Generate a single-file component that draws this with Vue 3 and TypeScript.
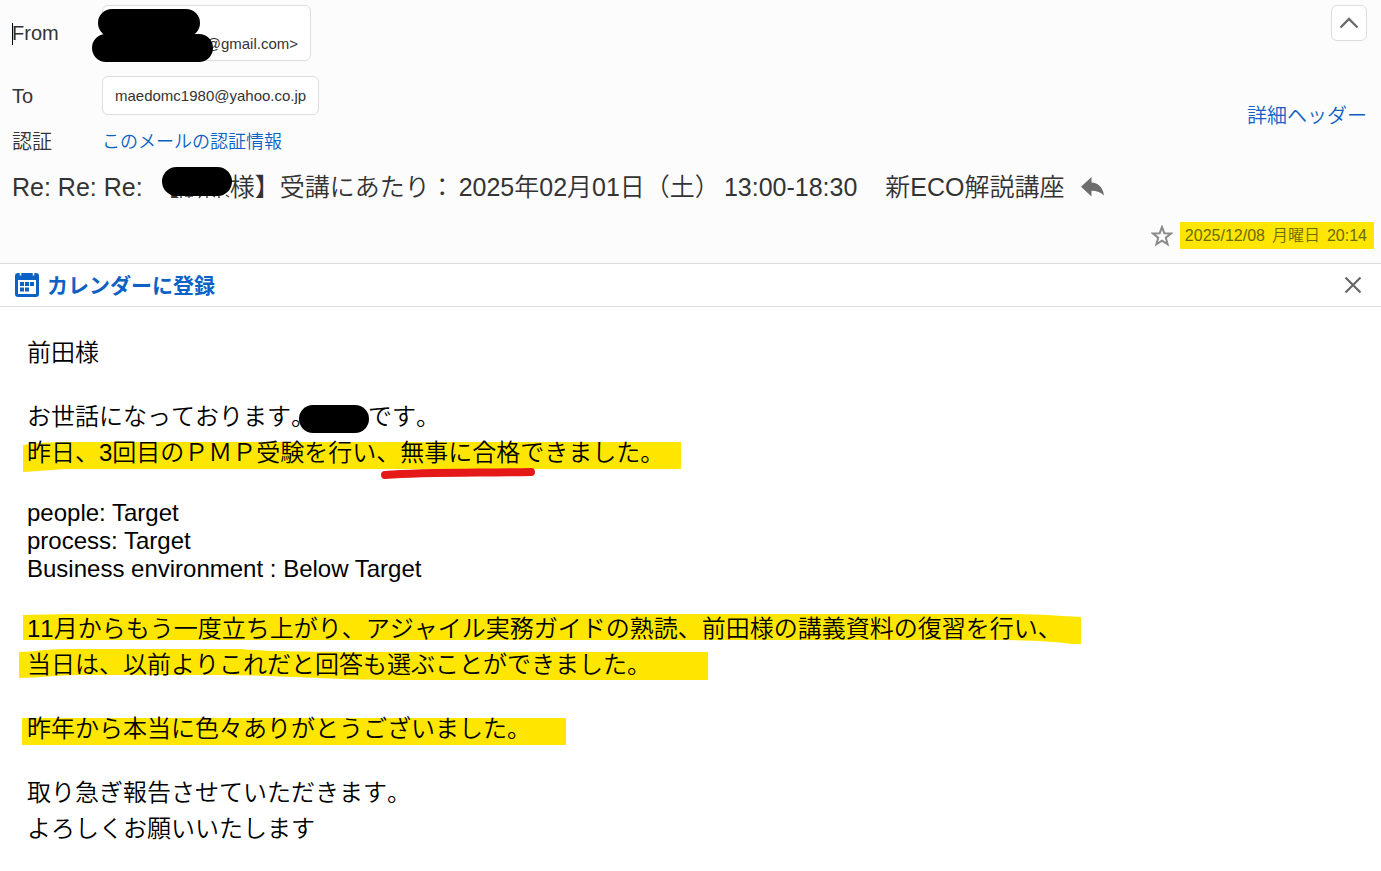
<script setup lang="ts">
interface Line {
  text: string
  kind: 'ja' | 'en' | 'gap'
  hidden?: string
}

const lines: Line[] = [
  { text: '前田様', kind: 'ja' },
  { text: '', kind: 'gap' },
  { text: 'お世話になっております。', kind: 'ja', hidden: 'です。' },
  { text: '昨日、3回目のＰＭＰ受験を行い、無事に合格できました。', kind: 'ja' },
  { text: '', kind: 'gap' },
  { text: 'people: Target', kind: 'en' },
  { text: 'process: Target', kind: 'en' },
  { text: 'Business environment : Below Target', kind: 'en' },
  { text: '', kind: 'gap' },
  { text: '11月からもう一度立ち上がり、アジャイル実務ガイドの熟読、前田様の講義資料の復習を行い、', kind: 'ja' },
  { text: '当日は、以前よりこれだと回答も選ぶことができました。', kind: 'ja' },
  { text: '', kind: 'gap' },
  { text: '昨年から本当に色々ありがとうございました。', kind: 'ja' },
  { text: '', kind: 'gap' },
  { text: '取り急ぎ報告させていただきます。', kind: 'ja' },
  { text: 'よろしくお願いいたします', kind: 'ja' },
]
</script>

<template>
  <main class="mail">
    <header class="head">
      <dl class="fields">
        <div class="field">
          <dt class="caret">From</dt>
          <dd>
            <span class="chip sender">@gmail.com&gt;
              <svg class="redact-from" width="122" height="54" viewBox="0 0 122 54" aria-hidden="true">
                <path d="M20 15H94M14 40H107" fill="none" stroke="#000" stroke-width="28" stroke-linecap="round" />
              </svg>
            </span>
          </dd>
        </div>
        <div class="field">
          <dt>To</dt>
          <dd><span class="chip">maedomc1980@yahoo.co.jp</span></dd>
        </div>
        <div class="field auth">
          <dt>認証</dt>
          <dd><a href="#auth">このメールの認証情報</a></dd>
        </div>
      </dl>
      <div class="tools">
        <button type="button" class="collapse" aria-label="ヘッダーを閉じる">
          <svg width="20" height="12" viewBox="0 0 20 12"><path d="M1.500 10.500L10 2L18.500 10.500" fill="none" stroke="#6b6b6b" stroke-width="2.400" /></svg>
        </button>
        <a href="#detail" class="detail">詳細ヘッダー</a>
      </div>
      <h1 class="subject">
        <span>Re: Re: Re:</span>
        <span class="addressee">【<span class="name"><svg width="70" height="32" viewBox="0 0 70 32" aria-hidden="true">
          <path d="M19 28v3M23 29h8M27 27v4M39 28l-2 3M45 27v4M50 28l3 2M57 27v4M64 28l3 2" fill="none" stroke="#444" stroke-width="1.500" />
          <rect width="70" height="29" rx="14.500" />
        </svg></span>様】受講にあたり：</span>
        <span>2025年02月01日（土）</span>
        <span>13:00-18:30</span>
        <span class="course">新ECO解説講座</span>
        <button type="button" class="plain reply" aria-label="返信">
          <svg width="24" height="20" viewBox="0 0 24 20"><path d="M10.500 0V5.600C17 5.800 22 10.500 23 18.500C20 15.500 16 13.800 10.500 13.800V19.500L0 9.800Z" fill="#6e6e6e" /></svg>
        </button>
      </h1>
      <div class="meta">
        <button type="button" class="plain" aria-label="スターを付ける">
          <svg width="22" height="22" viewBox="0 0 22 22"><path d="M11 2L13.300 8.200L20 8.500L14.800 12.700L16.600 19.300L11 15.600L5.400 19.300L7.200 12.700L2 8.500L8.700 8.200Z" fill="none" stroke="#8a8a8a" stroke-width="2" /></svg>
        </button>
        <time datetime="2025-12-08T20:14"><span>2025/12/08</span> <span>月曜日</span> <span>20:14</span></time>
      </div>
    </header>

    <div class="calendar">
      <a href="#calendar">
        <svg width="24" height="25" viewBox="0 0 24 25" aria-hidden="true">
          <rect x="0" y="1" width="24" height="24" rx="3" fill="#0b62c4" />
          <path d="M5.500 0V3.500M18.500 0V3.500" stroke="#fff" stroke-width="1.600" />
          <rect x="3" y="8" width="18" height="14" fill="#fff" />
          <path d="M5 10h4v4H5zM10 10h4v4h-4zM15 10h4v4h-4zM5 15.500h4v4H5zM10 15.500h4v4h-4z" fill="#0b62c4" />
        </svg>
        <span>カレンダーに登録</span>
      </a>
      <button type="button" class="plain" aria-label="閉じる">
        <svg width="18" height="18" viewBox="0 0 18 18"><path d="M1.500 1.500L16.500 16.500M16.500 1.500L1.500 16.500" fill="none" stroke="#666" stroke-width="2.200" /></svg>
      </button>
    </div>

    <article class="body">
      <svg class="marks" width="1100" height="460" viewBox="0 0 1100 460" aria-hidden="true">
        <g fill="#ffe600">
          <path d="M23 138C40 135 60 135 80 135H681V162H75C55 162 45 164 23 165Z" />
          <path d="M23 308L70 307H1010C1040 307 1060 309 1081 310V337H1072C1050 334 1020 333 990 333H23Z" />
          <path d="M19 345C35 345 45 342 65 342H240C270 345 330 345 380 345H708V373H400C330 373 280 368 220 368H80C55 368 40 371 19 371Z" />
          <path d="M22 411H566V438H50L22 438Z" />
        </g>
        <path d="M385 168C425 165 475 166 531 165" fill="none" stroke="#e61919" stroke-width="8" stroke-linecap="round" />
      </svg>
      <p v-for="(line, i) in lines" :key="i" :class="['line', line.kind]">
        {{ line.text }}<template v-if="line.hidden"><span class="redact"></span>{{ line.hidden }}</template>
      </p>
    </article>
  </main>
</template>

<style>
body {
  margin: 0;
  background: #fff;
}
</style>

<style scoped>
.mail {
  font-family: "Liberation Sans", "Noto Sans CJK JP", sans-serif;
  font-weight: 350;
  color: #333;
}
a {
  color: #0b62c4;
  text-decoration: none;
}
.plain {
  display: flex;
  padding: 0;
  border: 0;
  background: none;
}
.head {
  display: grid;
  grid-template-columns: 1fr auto;
  padding: 5px 7px 14px 12px;
  background: #fcfcfc;
  border-bottom: 1px solid #ddd;
}
.fields {
  margin: 0;
}
.field {
  display: flex;
  align-items: center;
  margin-bottom: 15px;
  font-size: 20px;
  line-height: 24px;
}
.field.auth {
  margin-bottom: 0;
}
dt {
  width: 90px;
}
.caret {
  position: relative;
}
.caret::before {
  content: "";
  position: absolute;
  left: 0;
  top: 2px;
  width: 1px;
  height: 22px;
  background: #000;
}
dd {
  margin: 0;
}
.auth dd {
  font-size: 18px;
}
.chip {
  display: block;
  box-sizing: border-box;
  padding: 9px 12px;
  border: 1px solid #ddd;
  border-radius: 6px;
  background: #fff;
  font-size: 15px;
  line-height: 19px;
}
.sender {
  position: relative;
  width: 209px;
  padding-top: 28px;
  padding-bottom: 7px;
  text-align: right;
}
.redact-from {
  position: absolute;
  left: -11px;
  top: 2px;
}
.tools {
  display: flex;
  flex-direction: column;
  align-items: flex-end;
  padding-right: 7px;
  gap: 61px;
}
.collapse {
  display: flex;
  align-items: center;
  justify-content: center;
  width: 36px;
  height: 36px;
  padding: 0;
  border: 1px solid #ddd;
  border-radius: 6px;
  background: #fff;
}
.detail {
  font-size: 20px;
  line-height: 28px;
}
.subject {
  grid-column: 1 / -1;
  display: flex;
  align-items: center;
  gap: 4px;
  margin: 15px 0 17px;
  font-size: 25px;
  font-weight: 350;
  line-height: 36px;
  white-space: nowrap;
}
.addressee {
  margin-left: 8px;
}
.course {
  margin-left: 24px;
}
.reply {
  margin-left: 12px;
}
.name {
  position: relative;
  display: inline-block;
  width: 50px;
  height: 1em;
}
.name svg {
  position: absolute;
  right: -2px;
  top: -4px;
}
.meta {
  grid-column: 1 / -1;
  display: flex;
  align-items: center;
  justify-content: flex-end;
  gap: 7px;
}
time {
  display: flex;
  gap: 7px;
  padding: 0 7px 0 5px;
  background: #ffe600;
  color: #6d6a0a;
  font-size: 16px;
  line-height: 27px;
}
.calendar {
  display: flex;
  align-items: center;
  justify-content: space-between;
  height: 42px;
  padding: 0 19px 0 15px;
  border-bottom: 1px solid #ddd;
}
.calendar a {
  display: flex;
  align-items: center;
  gap: 8px;
  padding-bottom: 2px;
  font-size: 21px;
  font-weight: 700;
}
.body {
  position: relative;
  isolation: isolate;
  padding: 28px 27px 24px;
  color: #000;
  font-size: 24px;
}
.marks {
  position: absolute;
  left: 0;
  top: 0;
  z-index: -1;
}
.line {
  margin: 0;
}
.ja {
  line-height: 36px;
  font-kerning: none;
}
.en,
.gap {
  line-height: 28px;
}
.gap {
  height: 28px;
}
.redact {
  display: inline-block;
  width: 70px;
  height: 28px;
  margin: 0 -1px 0 -16px;
  border-radius: 14px;
  background: #000;
  vertical-align: middle;
}
</style>
